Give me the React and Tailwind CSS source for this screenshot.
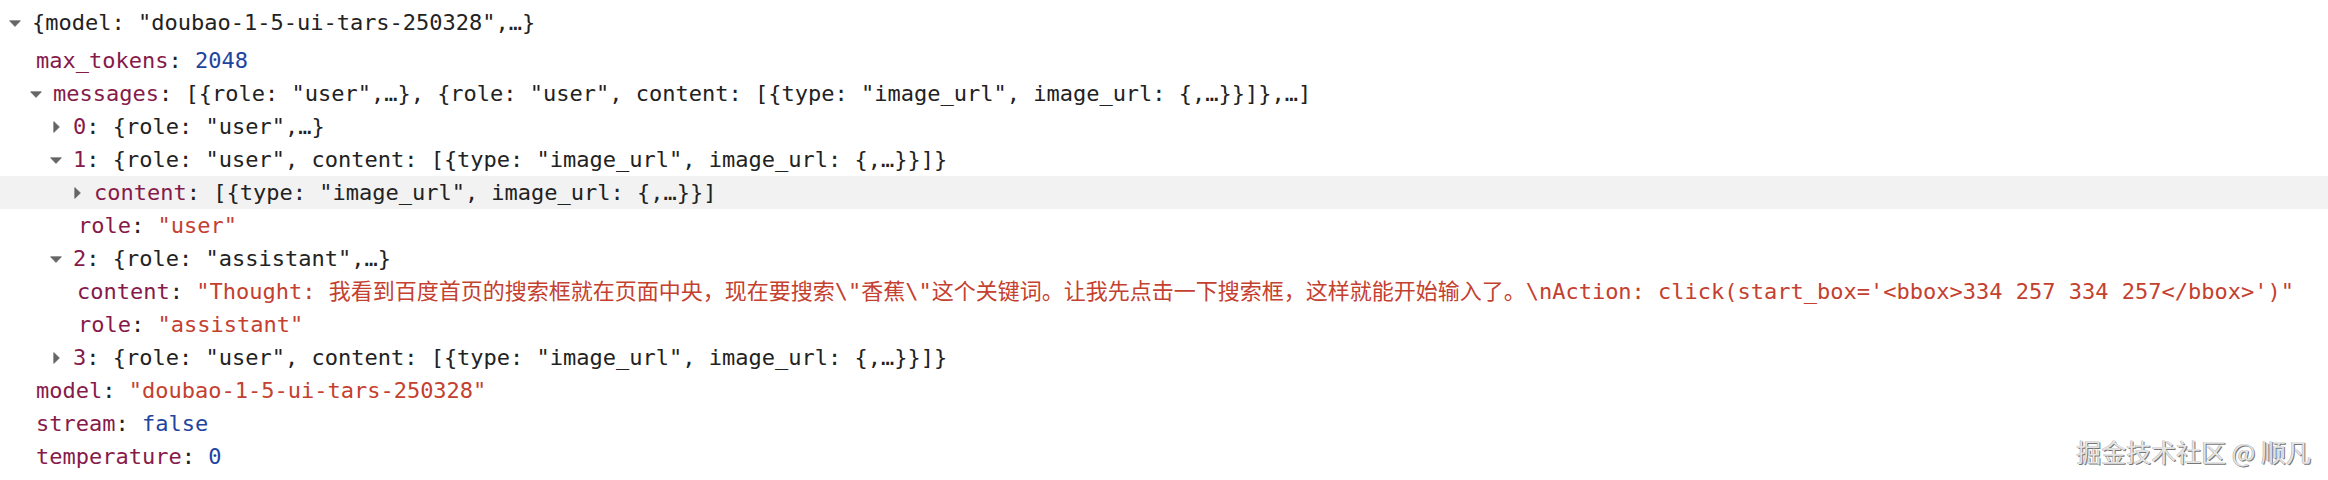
import React from 'react';

const K = ({ children }) => <span className="text-[#861a4a]">{children}</span>;
const S = ({ children }) => <span className="text-[#c4402f]">{children}</span>;
const N = ({ children }) => <span className="text-[#1f44a0]">{children}</span>;

const Down = () => (
    <span className="flex w-[12px] shrink-0 items-center justify-center pt-[2px]">
        <svg width="12" height="7" viewBox="0 0 12 7">
            <path d="M0.6 0.8h10.8L6 6.4z" fill="#666" stroke="#666" strokeWidth="0.8" strokeLinejoin="round" />
        </svg>
    </span>
);

const Right = () => (
    <span className="flex w-[12px] shrink-0 items-center justify-center pt-[1px]">
        <svg width="7" height="12" viewBox="0 0 7 12">
            <path d="M0.8 0.6v10.8L6.4 6z" fill="#666" stroke="#666" strokeWidth="0.8" strokeLinejoin="round" />
        </svg>
    </span>
);

const Row = ({ className = '', arrow, children }) => (
    <div className={`flex h-[33px] items-center whitespace-pre ${className}`}>
        {arrow}
        <span className={arrow ? 'ml-[11px]' : ''}>{children}</span>
    </div>
);

const thought =
    '"Thought: 我看到百度首页的搜索框就在页面中央，现在要搜索\\"香蕉\\"这个关键词。让我先点击一下搜索框，这样就能开始输入了。\\nAction: click(start_box=\'<bbox>334 257 334 257</bbox>\')"';

const imageUrl = '[{type: "image_url", image_url: {,…}}]';

export default function App() {
    return (
        <div className="relative h-[480px] w-[2328px] overflow-hidden bg-white pt-[6px] font-['DejaVu_Sans_Mono','Noto_Sans_CJK_SC',monospace] text-[22px] text-[#222]">
            <div className="mb-[5px] flex h-[33px] items-center whitespace-pre pl-[9px]">
                <Down />
                <span className="ml-[11px]">{'{model: "doubao-1-5-ui-tars-250328",…}'}</span>
            </div>
            <Row className="pl-[36px]">
                <K>max_tokens</K>: <N>2048</N>
            </Row>
            <Row className="pl-[30px]" arrow={<Down />}>
                <K>messages</K>: {'[{role: "user",…}, {role: "user", content: [{type: "image_url", image_url: {,…}}]},…]'}
            </Row>
            <Row className="pl-[50px]" arrow={<Right />}>
                <K>0</K>: {'{role: "user",…}'}
            </Row>
            <Row className="pl-[50px]" arrow={<Down />}>
                <K>1</K>: {'{role: "user", content: ' + imageUrl + '}'}
            </Row>
            <Row className="bg-[#f2f2f2] pl-[71px]" arrow={<Right />}>
                <K>content</K>: {imageUrl}
            </Row>
            <Row className="pl-[78px]">
                <K>role</K>: <S>"user"</S>
            </Row>
            <Row className="pl-[50px]" arrow={<Down />}>
                <K>2</K>: {'{role: "assistant",…}'}
            </Row>
            <Row className="pl-[77px]">
                <K>content</K>: <S>{thought}</S>
            </Row>
            <Row className="pl-[78px]">
                <K>role</K>: <S>"assistant"</S>
            </Row>
            <Row className="pl-[50px]" arrow={<Right />}>
                <K>3</K>: {'{role: "user", content: ' + imageUrl + '}'}
            </Row>
            <Row className="pl-[36px]">
                <K>model</K>: <S>"doubao-1-5-ui-tars-250328"</S>
            </Row>
            <Row className="pl-[36px]">
                <K>stream</K>: <N>false</N>
            </Row>
            <Row className="pl-[36px]">
                <K>temperature</K>: <N>0</N>
            </Row>

            <div className="absolute bottom-[14px] right-[17px] font-['Noto_Sans_CJK_SC',sans-serif] text-[25px] leading-[30px] text-[#e4e4e4] [text-shadow:1px_1px_0_#777,-0.5px_-0.5px_0_#aaa]">
                掘金技术社区 @ 顺凡
            </div>
        </div>
    );
}
